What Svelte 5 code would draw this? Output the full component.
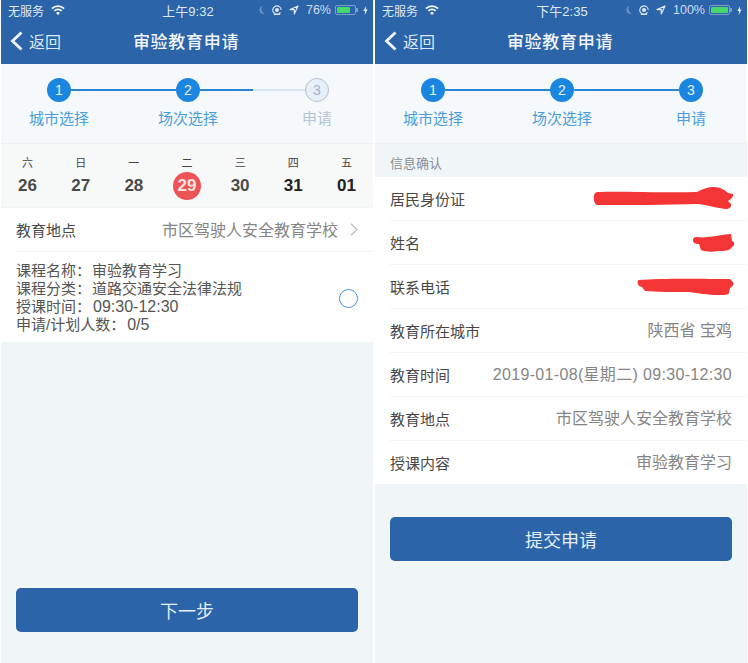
<script>
	const days = [
		{ w: '六', d: '26' },
		{ w: '日', d: '27' },
		{ w: '一', d: '28' },
		{ w: '二', d: '29', on: true },
		{ w: '三', d: '30' },
		{ w: '四', d: '31', strong: true },
		{ w: '五', d: '01', strong: true }
	];
	const course = [
		['课程名称：', '审验教育学习'],
		['课程分类：', '道路交通安全法律法规'],
		['授课时间：', '09:30-12:30'],
		['申请/计划人数：', '0/5']
	];
	const info = [
		['教育所在城市', '陕西省 宝鸡'],
		['教育时间', '2019-01-08(星期二) 09:30-12:30'],
		['教育地点', '市区驾驶人安全教育学校'],
		['授课内容', '审验教育学习']
	];
	const stepNames = ['城市选择', '场次选择', '申请'];
	const startsWithDigit = (s) => /^\d/.test(s);
</script>

{#snippet statusBar(time, pct, level)}
	<div class="status">
		<div class="st-left">
			<span>无服务</span>
			<svg width="14" height="10" viewBox="0 0 14 10" fill="none" stroke="#f2f6fa" stroke-width="1.8">
				<path d="M.9 3.7a8.4 8.4 0 0 1 12.2 0" />
				<path d="M3.3 6a5 5 0 0 1 7.4 0" />
				<path d="M7 10 5 7.9a2.8 2.8 0 0 1 4 0z" fill="#f2f6fa" stroke="none" />
			</svg>
		</div>
		<div class="st-time">{time}</div>
		<div class="st-right">
			<svg width="7" height="10" viewBox="0 0 7 10"><path d="M4.5 1a4 4 0 1 0 2.4 7.6A4.8 4.8 0 0 1 4.5 1z" fill="#6f94c4" /></svg>
			<svg class="gap-l" width="10" height="10" viewBox="0 0 10 10" fill="none" stroke="#dfe8f2" stroke-width="1.1">
				<path d="M8.5 7.4A4.2 4.2 0 1 1 9.2 5" />
				<circle cx="5" cy="5" r="2" fill="#dfe8f2" stroke="none" />
				<path d="M1.8 9.4h6.4" />
			</svg>
			<svg class="gap-l" width="10" height="10" viewBox="0 0 10 10" fill="none" stroke="#dfe8f2" stroke-width="1.2">
				<path d="M9 1 1 4.600h4.300V9z" stroke-linejoin="round" />
			</svg>
			<span class="pct">{pct}</span>
			<div class="batt"><i style="width: {level}%"></i></div>
			<div class="nub"></div>
			<svg width="5" height="9" viewBox="0 0 5 9"><path d="M3.200 0 .3 5h1.800L1.600 9l3.100-5.400H2.800z" fill="#e6edf5" /></svg>
		</div>
	</div>
{/snippet}

{#snippet topBar()}
	<div class="nav">
		<div class="back">
			<svg width="13" height="20" viewBox="0 0 13 20" fill="none" stroke="#f2f6fa" stroke-width="2.8">
				<path d="M11.500 1.500 2.500 10l9 8.500" />
			</svg>
			<span>返回</span>
		</div>
		<div class="title">审验教育申请</div>
	</div>
{/snippet}

{#snippet stepper(current)}
	<div class="stepper">
		<div class="track">
			<div class="dot">1</div>
			<div class="line"></div>
			<div class="dot">2</div>
			<div class="line" class:half={current < 3}></div>
			<div class="dot" class:idle={current < 3}>3</div>
		</div>
		<div class="step-names">
			{#each stepNames as name, i}
				<span class:idle={i + 1 > current}>{name}</span>
			{/each}
		</div>
	</div>
{/snippet}

<main class="page">
	<section class="phone">
		<header class="head">
			{@render statusBar('上午9:32', '76%', 76)}
			{@render topBar()}
		</header>
		{@render stepper(2)}

		<div class="dates">
			{#each days as day}
				<div class="day" class:strong={day.strong}>
					<span class="wk">{day.w}</span>
					<span class="num" class:on={day.on}>{day.d}</span>
				</div>
			{/each}
		</div>

		<div class="row place">
			<span class="label">教育地点</span>
			<span class="value">市区驾驶人安全教育学校</span>
			<svg class="chev" width="8" height="13" viewBox="0 0 8 13" fill="none" stroke="#bdbdbd" stroke-width="1.3">
				<path d="M1 .8 7 6.500 1 12.200" />
			</svg>
		</div>

		<div class="course">
			<div class="course-text">
				{#each course as [k, v]}
					<div><span>{k}</span><span class="cv" class:digits={startsWithDigit(v)}>{v}</span></div>
				{/each}
			</div>
			<div class="radio"></div>
		</div>

		<button class="btn next">下一步</button>
	</section>

	<section class="phone">
		<header class="head">
			{@render statusBar('下午2:35', '100%', 100)}
			{@render topBar()}
		</header>
		{@render stepper(3)}

		<div class="sec-title">信息确认</div>

		<div class="rows">
			<div class="row">
				<span class="label">居民身份证</span>
				<svg class="scrib" width="141" height="23" viewBox="0 0 141 23">
					<path d="M4 5C30 4 70 6 104 5c5-3 11-5 17-5 6 0 11 3 14 6l5 1c1 2-1 5-5 7l3 3c1 3-2 5-5 5-5 0-18-4-28-5-30 1-70 1-100 1C0 18-1 6 4 5z" fill="#f33535" />
				</svg>
			</div>
			<div class="row">
				<span class="label">姓名</span>
				<svg class="scrib" width="41" height="18" viewBox="0 0 41 18">
					<path d="M3 3c4 0 8 1 11 0 8 0 16-3 24-3l1 7 2 1c1 2 0 4-2 5-2 4-8 4-13 4-6 1-14 1-18-1l-2-6C2 10 0 9 0 6c0-2 1-3 3-3z" fill="#f33535" />
				</svg>
			</div>
			<div class="row">
				<span class="label">联系电话</span>
				<svg class="scrib" width="97" height="17" viewBox="0 0 97 17">
					<path d="M2 2C25 0 70 1 93 1l3 3c1 2 0 4-3 6l-1 5c-1 2-5 2-10 2-12 0-20-2-30-3-16 0-32 0-44-1L5 9C1 9-1 3 2 2z" fill="#f33535" />
				</svg>
			</div>
			{#each info as [k, v]}
				<div class="row">
					<span class="label">{k}</span>
					<span class="value" class:digits={startsWithDigit(v)}>{v}</span>
				</div>
			{/each}
		</div>

		<button class="btn submit">提交申请</button>
	</section>
</main>

<style>
	:global(body) {
		background: #fff;
		font-family: 'Liberation Sans', 'Noto Sans CJK SC', sans-serif;
	}
	.page {
		display: flex;
		gap: 2px;
		padding-left: 1px;
		height: 663px;
		overflow: hidden;
	}
	.phone {
		width: 372px;
		flex: none;
		background: #f0f5f8;
		display: flex;
		flex-direction: column;
	}

	.head {
		background: #2b64a8;
		height: 64px;
		color: #f2f6fa;
	}
	.status {
		height: 20px;
		display: grid;
		grid-template-columns: 1fr auto 1fr;
		align-items: center;
		padding: 0 5px 0 7px;
		font-size: 12px;
		color: #dfe8f2;
	}
	.st-left {
		display: flex;
		align-items: center;
		gap: 7px;
	}
	.st-time {
		font-size: 13px;
	}
	.st-right {
		display: flex;
		align-items: center;
		justify-content: flex-end;
	}
	.gap-l {
		margin-left: 7px;
	}
	.pct {
		font-size: 12.5px;
		margin-left: 7px;
		color: #cfdcec;
	}
	.batt {
		width: 21px;
		height: 10px;
		margin-left: 4px;
		padding: 1px;
		box-sizing: border-box;
		border: 1px solid #7b9fcb;
		border-radius: 2px;
	}
	.batt i {
		display: block;
		height: 100%;
		background: #45d96a;
		border-radius: 1px;
	}
	.nub {
		width: 2px;
		height: 4px;
		margin: 0 5px 0 0;
		background: #7b9fcb;
	}
	.nav {
		height: 44px;
		display: grid;
		grid-template-columns: 1fr auto 1fr;
		align-items: center;
		padding: 0 9px 3px;
		box-sizing: border-box;
	}
	.back {
		display: flex;
		align-items: center;
		gap: 6px;
		font-size: 16px;
		color: #dfe8f2;
	}
	.title {
		font-size: 17px;
		font-weight: 500;
		letter-spacing: 0.7px;
		margin-right: 2px;
	}

	.stepper {
		background: #f5f9fb;
		border-bottom: 1px solid #edf1f4;
		display: flex;
		flex-direction: column;
		padding-top: 14px;
		height: 65px;
	}
	.track {
		display: flex;
		align-items: center;
		padding: 0 44px 0 46px;
	}
	.dot {
		width: 24px;
		height: 24px;
		box-sizing: border-box;
		flex: none;
		border-radius: 50%;
		background: #1b86e0;
		color: #e6f2fc;
		font-size: 14px;
		display: flex;
		align-items: center;
		justify-content: center;
	}
	.dot.idle {
		background: #e7eff8;
		border: 1px solid #b5c2ce;
		color: #9fb2c8;
	}
	.line {
		flex: 1;
		height: 2px;
		background: #2b85cf;
	}
	.line.half {
		background: linear-gradient(90deg, #2b85cf 50%, #d6e4ef 50%);
	}
	.step-names {
		display: grid;
		grid-template-columns: repeat(3, 116px);
		column-gap: 13px;
		margin-top: 5px;
		font-size: 15px;
		text-align: center;
		color: #4a9ddc;
	}
	.step-names .idle {
		color: #b6c4cf;
	}

	.dates {
		display: grid;
		grid-template-columns: repeat(7, 1fr);
		height: 63px;
		background: #f7f8f8;
		border-bottom: 1px solid #f1f3f4;
	}
	.day {
		display: flex;
		flex-direction: column;
		align-items: center;
		color: #4a4a4a;
	}
	.day.strong {
		color: #222;
	}
	.wk {
		font-size: 11px;
		line-height: 14px;
		margin-top: 12px;
		color: #444;
	}
	.num {
		width: 28px;
		height: 28px;
		margin-top: 2px;
		border-radius: 50%;
		display: flex;
		align-items: center;
		justify-content: center;
		font-size: 17px;
		font-weight: 700;
	}
	.num.on {
		background: #ee5457;
		color: #fbe3e3;
	}

	.rows {
		background: #fff;
	}
	.row {
		height: 44px;
		margin-left: 15px;
		padding-right: 15px;
		box-sizing: border-box;
		display: flex;
		align-items: center;
		justify-content: space-between;
		border-bottom: 1px solid #f3f4f5;
		font-size: 15px;
		background: #fff;
		color: #444;
	}
	.rows .row:last-child {
		border-bottom: none;
		height: 43px;
	}
	.label {
		color: #484848;
	}
	.value {
		color: #858585;
		font-size: 16px;
		padding-bottom: 3px;
	}
	.value.digits {
		letter-spacing: 0.33px;
	}
	.place {
		margin-left: 0;
		padding-left: 15px;
		padding-bottom: 2px;
		justify-content: flex-start;
		border-bottom: none;
		background: linear-gradient(#f3f4f5, #f3f4f5) 15px 100% / 100% 1px no-repeat #fff;
	}
	.place .value {
		margin-left: auto;
		padding-bottom: 1px;
	}
	.chev {
		margin-left: 12px;
	}
	.scrib {
		margin-right: -2px;
	}

	.course {
		height: 90px;
		background: #fff;
		padding: 2px 15px 0;
		box-sizing: border-box;
		display: flex;
		align-items: center;
		justify-content: space-between;
		font-size: 15px;
		line-height: 18px;
		color: #555;
	}
	.cv {
		margin-left: 1px;
	}
	.cv.digits {
		font-size: 16px;
		margin-left: 2px;
	}
	.radio {
		width: 19px;
		height: 19px;
		box-sizing: border-box;
		border: 1.5px solid #4a90d9;
		border-radius: 50%;
	}

	.sec-title {
		height: 33px;
		padding: 3px 0 0 15px;
		box-sizing: border-box;
		display: flex;
		align-items: center;
		font-size: 13px;
		color: #8a8f94;
	}

	.btn {
		margin: 0 15px;
		height: 44px;
		border: none;
		border-radius: 5px;
		background: #2b64a8;
		color: #e6eef6;
		font: inherit;
		font-size: 18px;
	}
	.next {
		margin-top: 246px;
	}
	.submit {
		margin-top: 33px;
	}
</style>
